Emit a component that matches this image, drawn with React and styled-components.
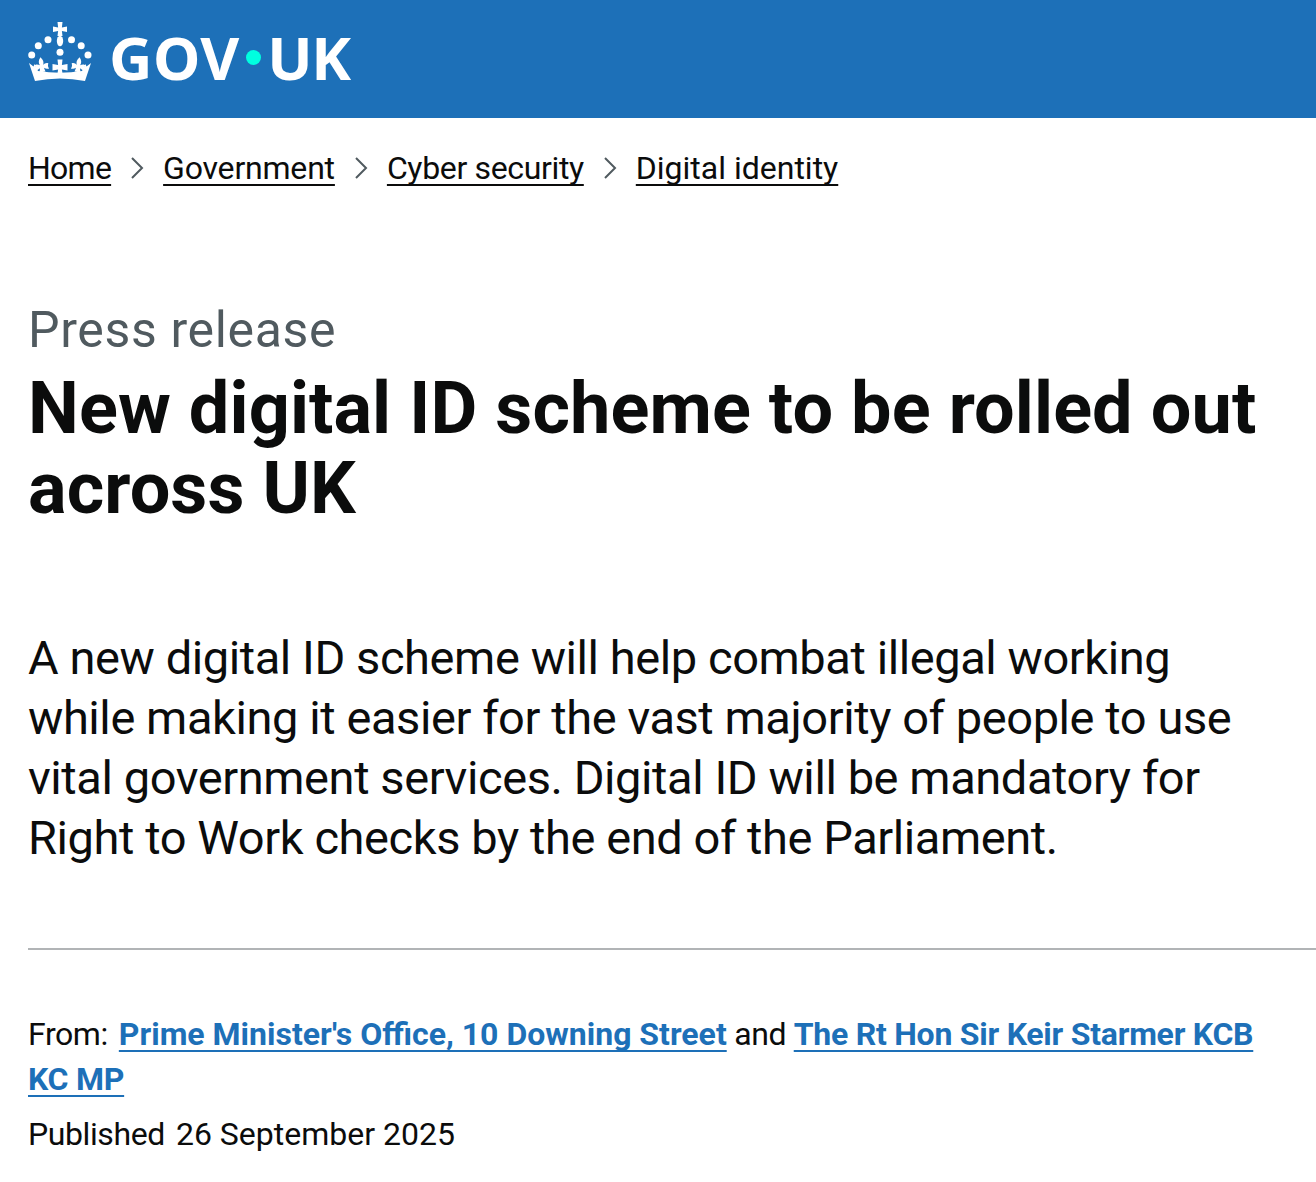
import React from 'react'
import styled, { createGlobalStyle } from 'styled-components'

const GlobalStyle = createGlobalStyle`
  * {
    box-sizing: border-box;
  }
  html, body {
    margin: 0;
    padding: 0;
    background: #ffffff;
    color: #0b0c0c;
    font-family: Roboto, Arial, sans-serif;
  }
`

const Header = styled.header`
  height: 118px;
  background: #1d70b8;
  display: flex;
  align-items: center;
  padding-left: 28px;
`

const Logo = styled.a`
  display: flex;
  align-items: center;
  color: #ffffff;
  text-decoration: none;
`

const Crown = styled.svg`
  width: 64px;
  height: 62px;
  margin-top: -12px;
  display: block;
`

const LogoText = styled.span`
  display: flex;
  align-items: center;
  margin: -4px 0 0 17px;
  font-family: "Noto Sans", Arial, sans-serif;
  font-size: 60px;
  line-height: 60px;
  font-weight: 700;
  letter-spacing: 0.5px;
`

const LogoDot = styled.span`
  width: 15px;
  height: 15px;
  border-radius: 50%;
  background: #00ffe0;
  margin: 0 6px 0 6.5px;
`

const LogoEnd = styled.span`
  letter-spacing: -1.5px;
`

const Main = styled.main`
  padding-left: 28px;
`

const Breadcrumbs = styled.nav`
  display: flex;
  align-items: center;
  height: 100px;
  font-size: 32px;
`

const Crumb = styled.a`
  color: #0b0c0c;
  letter-spacing: ${(p) => p.$track || 0}px;
  text-decoration: underline;
  text-decoration-thickness: 2px;
  text-decoration-skip-ink: none;
  text-underline-offset: 5px;
`

const Chevron = styled.svg`
  width: 14px;
  height: 24px;
  margin: 0 19px;
  display: block;
`

const Title = styled.div`
  margin-top: 82px;
  padding-right: 40px;
`

const Kicker = styled.div`
  font-size: 50px;
  line-height: 60px;
  letter-spacing: 0.65px;
  color: #505a5f;
`

const Heading = styled.h1`
  margin: 9px 0 0;
  font-size: 72px;
  line-height: 80px;
  font-weight: 700;
  letter-spacing: 0.1px;
`

const Lead = styled.p`
  margin: 99px 0 0;
  max-width: 1210px;
  font-size: 47px;
  line-height: 60px;
  letter-spacing: -0.42px;
`

const Meta = styled.div`
  margin-top: 80px;
  border-top: 2px solid #b1b4b6;
  padding-top: 62px;
  font-size: 32px;
`

const Line = styled.div`
  line-height: 45px;
  max-width: 1240px;
`

const FromLabel = styled.span`
  letter-spacing: -0.4px;
  margin-right: 3px;
`

const Joiner = styled.span`
  letter-spacing: -0.4px;
`

const PublishedLabel = styled.span`
  letter-spacing: -0.4px;
  margin-right: 11px;
`

const Published = styled.div`
  margin-top: 10px;
  line-height: 45px;
`

const FromLink = styled.a`
  color: #1d70b8;
  font-weight: 700;
  letter-spacing: ${(p) => p.$track || 0}px;
  text-decoration: underline;
  text-decoration-thickness: 2px;
  text-decoration-skip-ink: none;
  text-underline-offset: 5px;
`

const FLEUR =
  'M0-15C2.600-12 2.800-9.500 1.700-7C3-8 5.500-9 7-7.500C6-6 6-4 7-2.500C5.500-2 3.500-3 2-4L3 0H-3L-2-4C-3.500-3-5.500-2-7-2.500C-6-4-6-6-7-7.500C-5.500-9-3-8-1.700-7C-2.800-9.500-2.600-12 0-15Z'

const CrownIcon = () => (
  <Crown viewBox="0 0 64 62" fill="#ffffff">
    <path d="M29.500 0h5l-.6 5.500 5.100-1v5.600l-5.100-1 .6 5h-5l.6-5-5.100 1V4.500l5.100 1z" />
    <ellipse cx="32" cy="19" rx="3.200" ry="5.200" />
    <circle cx="3.700" cy="33" r="3.500" />
    <circle cx="10.300" cy="23.700" r="3.500" />
    <circle cx="20" cy="17.700" r="3.500" />
    <circle cx="32" cy="30.300" r="3.500" />
    <circle cx="43.500" cy="17.700" r="3.500" />
    <circle cx="53.200" cy="23.700" r="3.500" />
    <circle cx="60" cy="33" r="3.500" />
    <path d="M29.500 37.500h5l-.6 5.500 5.600-1v6.500l-5.600-1 .6 4h-5l.6-4-5.600 1V42l5.600 1z" />
    <path d={FLEUR} transform="translate(14.500 50) rotate(-8)" />
    <path d={FLEUR} transform="translate(49.500 50) rotate(8)" />
    <path d="M1 41l4.500 3.500 1-2.500 3.500 7q22 3.500 44 0l3.500-7 1 2.500L63 41l-6 18q-25-5-50 0z" />
  </Crown>
)

const ChevronIcon = () => (
  <Chevron viewBox="0 0 14 24" fill="none" stroke="#505a5f" strokeWidth="2">
    <path d="M2 2l10 10L2 22" />
  </Chevron>
)

const App = () => {
  return (
    <>
      <GlobalStyle />
      <Header>
        <Logo href="#">
          <CrownIcon />
          <LogoText>
            GOV
            <LogoDot />
            <LogoEnd>UK</LogoEnd>
          </LogoText>
        </Logo>
      </Header>
      <Main>
        <Breadcrumbs>
          <Crumb href="#" $track={-0.75}>Home</Crumb>
          <ChevronIcon />
          <Crumb href="#" $track={-0.2}>Government</Crumb>
          <ChevronIcon />
          <Crumb href="#" $track={-0.35}>Cyber security</Crumb>
          <ChevronIcon />
          <Crumb href="#">Digital identity</Crumb>
        </Breadcrumbs>
        <Title>
          <Kicker>Press release</Kicker>
          <Heading>New digital ID scheme to be rolled out across UK</Heading>
        </Title>
        <Lead>
          A new digital ID scheme will help combat illegal working while making
          it easier for the vast majority of people to use vital government
          services. Digital ID will be mandatory for Right to Work checks by the
          end of the Parliament.
        </Lead>
        <Meta>
          <Line>
            <FromLabel>From:</FromLabel>{' '}
            <FromLink href="#">Prime Minister's Office, 10 Downing Street</FromLink>
            <Joiner> and </Joiner>
            <FromLink href="#" $track={-0.25}>The Rt Hon Sir Keir Starmer KCB KC MP</FromLink>
          </Line>
          <Published>
            <PublishedLabel>Published</PublishedLabel>26 September 2025
          </Published>
        </Meta>
      </Main>
    </>
  )
}

export default App
